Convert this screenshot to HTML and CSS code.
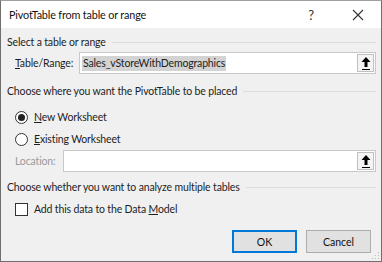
FILE: index.html
```html
<!DOCTYPE html>
<html lang="en">
<head>
  <meta charset="UTF-8" />
  <title>PivotTable from table or range</title>
  <link rel="stylesheet" href="styles.css">
</head>
<body>
  <div class="dialog">
    <div class="titlebar">
      <span class="title">PivotTable from table or range</span>
      <span class="help">?</span>
      <svg class="close" width="12" height="12" viewBox="0 0 12 12">
        <path d="M1 1 L11 11 M11 1 L1 11" stroke="#333" stroke-width="1.1" fill="none"/>
      </svg>
    </div>

    <div class="content">
      <div class="group-title"><span>Select a table or range</span></div>
      <div class="field-row range">
        <label class="field-label"><u>T</u>able/Range:</label>
        <div class="textbox">
          <span class="selected">Sales_vStoreWithDemographics</span>
          <span class="picker">
            <svg width="12" height="16" viewBox="0 0 12 16">
              <path d="M6 2 L1.5 7 H4.5 V12 H7.5 V7 H10.5 Z" fill="#000"/>
              <rect x="2" y="14" width="8" height="1" fill="#000"/>
            </svg>
          </span>
        </div>
      </div>

      <div class="group-title place"><span>Choose where you want the PivotTable to be placed</span></div>
      <div class="radio-list">
        <div class="radio-row">
          <span class="radio checked"></span>
          <span><u>N</u>ew Worksheet</span>
        </div>
        <div class="radio-row">
          <span class="radio"></span>
          <span><u>E</u>xisting Worksheet</span>
        </div>
        <div class="field-row location">
          <label class="field-label disabled">Location:</label>
          <div class="textbox">
            <span></span>
            <span class="picker">
              <svg width="12" height="16" viewBox="0 0 12 16">
                <path d="M6 2 L1.5 7 H4.5 V12 H7.5 V7 H10.5 Z" fill="#000"/>
                <rect x="2" y="14" width="8" height="1" fill="#000"/>
              </svg>
            </span>
          </div>
        </div>
      </div>

      <div class="group-title tables"><span>Choose whether you want to analyze multiple tables</span></div>
      <div class="check-row">
        <span class="checkbox"></span>
        <span>Add this data to the Data <u>M</u>odel</span>
      </div>

      <div class="buttons">
        <button class="btn default">OK</button>
        <button class="btn">Cancel</button>
      </div>
    </div>
    <svg class="grip" width="8" height="8" viewBox="0 0 8 8">
      <rect x="6" y="0" width="1" height="1" fill="#bbb"/>
      <rect x="3" y="3" width="1" height="1" fill="#bbb"/>
      <rect x="6" y="3" width="1" height="1" fill="#bbb"/>
      <rect x="0" y="6" width="1" height="1" fill="#bbb"/>
      <rect x="3" y="6" width="1" height="1" fill="#bbb"/>
      <rect x="6" y="6" width="1" height="1" fill="#bbb"/>
    </svg>
  </div>
</body>
</html>
```

FILE: styles.css
```css
* {
  box-sizing: border-box;
}

body {
  margin: 0;
  font-family: Lato, "Liberation Sans", sans-serif;
  font-size: 10.5px;
  letter-spacing: -0.15px;
  color: #1e1e1e;
}

.dialog {
  position: relative;
  width: 382px;
  height: 262px;
  background: #f0f0f0;
  border: 1px solid #6f6f6f;
  border-top-color: #a0a0a0;
}

.titlebar {
  display: flex;
  align-items: center;
  height: 27px;
  background: #fff;
  padding-left: 8px;
}

.title {
  flex: 1;
  font-size: 10.8px;
  color: #111;
}

.help {
  font-size: 13px;
  color: #333;
  margin-right: 38px;
}

.close {
  margin-right: 17px;
}

.content {
  padding: 6px 5px 0 6px;
}

.group-title {
  display: flex;
  align-items: center;
  height: 16px;
}

.group-title::after {
  content: "";
  flex: 1;
  height: 1px;
  background: #dcdcdc;
  margin-left: 6px;
}

.group-title.place {
  margin-top: 9px;
}

.group-title.tables {
  margin-top: 7px;
}

.field-row {
  display: flex;
  align-items: center;
  margin-left: 8px;
}

.field-row.range {
  margin-top: 2px;
}

.field-label {
  width: 64px;
}

.field-label.disabled {
  width: 48px;
  color: #9a9a9a;
}

.textbox {
  flex: 1;
  display: flex;
  align-items: center;
  justify-content: space-between;
  height: 22px;
  background: #fff;
  border: 1px solid #c8c8c8;
  padding-left: 2px;
}

.selected {
  background: #d3d3d3;
  padding: 0 1px;
  line-height: 15px;
}

.picker {
  display: flex;
  align-items: center;
  justify-content: center;
  width: 17px;
  height: 18px;
  border: 1px solid #c0c0c0;
  background: #f4f4f4;
  margin-right: 1px;
}

.radio-list {
  margin-top: 7px;
}

.radio-row,
.check-row {
  display: flex;
  align-items: center;
  height: 22px;
  margin-left: 8px;
}

.check-row {
  margin-top: 3px;
}

.radio {
  width: 13px;
  height: 13px;
  border: 1px solid #333;
  border-radius: 50%;
  background: #fff;
  margin-right: 6px;
  display: flex;
  align-items: center;
  justify-content: center;
}

.radio.checked::after {
  content: "";
  width: 7px;
  height: 7px;
  border-radius: 50%;
  background: #222;
}

.checkbox {
  width: 13px;
  height: 13px;
  border: 1px solid #333;
  background: #fff;
  margin-right: 6px;
}

.buttons {
  display: flex;
  justify-content: flex-end;
  gap: 9px;
  margin-top: 10px;
  padding-right: 5px;
}

.btn {
  width: 65px;
  height: 23px;
  background: #e1e1e1;
  border: 1px solid #adadad;
  font-family: Lato, "Liberation Sans", sans-serif;
  font-size: 10.5px;
  color: #111;
  padding: 0;
}

.btn.default {
  border: 2px solid #0078d7;
}

.grip {
  position: absolute;
  right: 1px;
  bottom: 1px;
}
```
